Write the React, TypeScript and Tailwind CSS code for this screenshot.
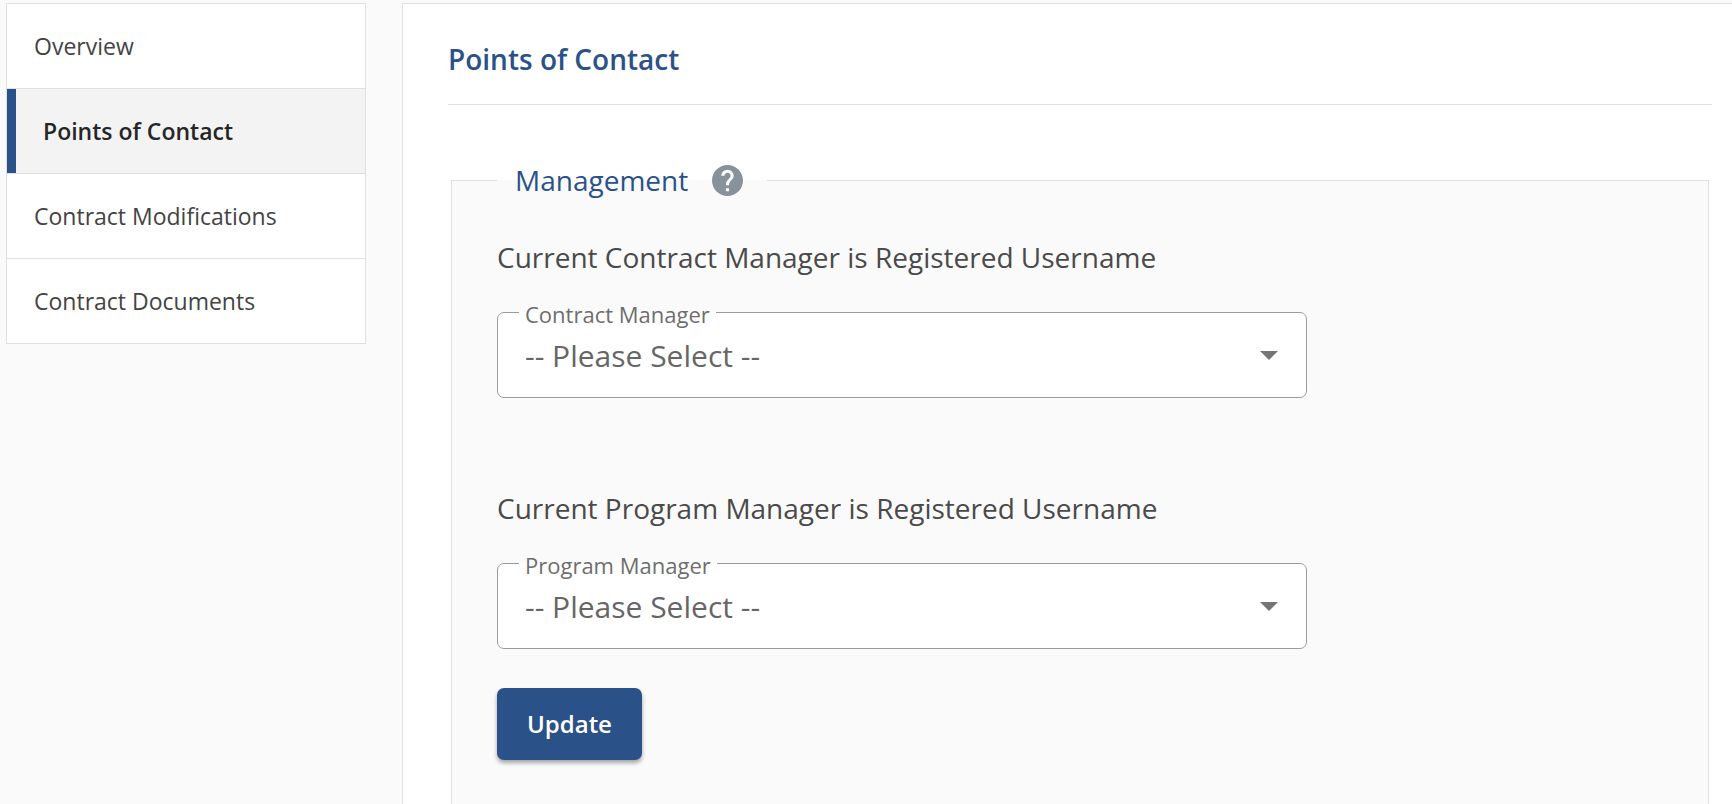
import { useId } from "react";

const NAV_ITEMS = [
  { label: "Overview", active: false },
  { label: "Points of Contact", active: true },
  { label: "Contract Modifications", active: false },
  { label: "Contract Documents", active: false },
];

function SideNav() {
  return (
    <nav aria-label="Contract sections" className="w-[360px] shrink-0">
      <ul className="divide-y divide-[#e0e0e0] border border-[#e0e0e0] bg-white">
        {NAV_ITEMS.map(({ label, active }) => (
          <li key={label}>
            <a
              href="#"
              aria-current={active ? "page" : undefined}
              className={
                active
                  ? "flex h-[84px] items-center border-l-[9px] border-[#2b5288] bg-[#f3f3f3] px-[27px] text-[23px] font-semibold text-[#262626]"
                  : "flex h-[84px] items-center px-[27px] text-[23px] text-[#444]"
              }
            >
              {label}
            </a>
          </li>
        ))}
      </ul>
    </nav>
  );
}

function ManagerField({ heading, label }: { heading: string; label: string }) {
  const id = useId();
  return (
    <div>
      <h3 className="text-[28px] leading-9 text-[#4a4a4a]">{heading}</h3>
      <fieldset className="relative mt-[25px] h-[98px] max-w-[810px] rounded-[7px] border border-[#9b9b9b] bg-white">
        <legend className="ml-[21px] h-6 px-[6px] text-[22px] leading-7 text-[#6e6e6e]">
          <label htmlFor={id}>{label}</label>
        </legend>
        <select
          id={id}
          className="block h-[66px] w-full appearance-none bg-transparent pr-16 pb-1 pl-[27px] text-[30px] text-[#666] outline-none"
        >
          <option>-- Please Select --</option>
        </select>
        <svg
          aria-hidden="true"
          viewBox="0 0 18 9"
          className="pointer-events-none absolute top-[27px] right-7 h-[9px] w-[18px] fill-[#757575]"
        >
          <path d="M0 0h18l-9 9z" />
        </svg>
      </fieldset>
    </div>
  );
}

export default function App() {
  return (
    <div className="flex min-h-screen gap-9 bg-[#fafafa] pt-[3px] pl-1.5 font-['Open_Sans',sans-serif]">
      <SideNav />
      <main className="flex min-w-0 flex-1 flex-col border-t border-l border-[#e0e0e0] bg-white pr-5 pl-[45px]">
        <h1 className="border-b border-[#e0e0e0] pt-[37px] pb-[27px] text-[28px] leading-9 font-semibold text-[#2b5288]">
          Points of Contact
        </h1>
        <fieldset className="mx-[3px] mt-[55px] flex-1 border border-b-0 border-[#e0e0e0] bg-[#fafafa] px-[45px]">
          <legend className="flex h-10 items-center gap-6 pr-6 pl-[18px] text-[28px] text-[#2b5288]">
            Management
            <button type="button" aria-label="Help with management contacts">
              <svg viewBox="2 2 20 20" className="size-[31px] fill-[#87929a]">
                <path d="M12 2C6.48 2 2 6.48 2 12s4.480 10 10 10 10-4.480 10-10S17.520 2 12 2zm1 17h-2v-2h2v2zm2.070-7.750l-.9.920C13.450 12.900 13 13.500 13 15h-2v-.5c0-1.100.450-2.100 1.170-2.830l1.240-1.260c.370-.360.590-.860.590-1.410 0-1.100-.9-2-2-2s-2 .9-2 2H8c0-2.210 1.790-4 4-4s4 1.790 4 4c0 .880-.360 1.680-.930 2.250z" />
              </svg>
            </button>
          </legend>
          <div className="flex flex-col gap-[92px] pt-[39px]">
            <ManagerField
              heading="Current Contract Manager is Registered Username"
              label="Contract Manager"
            />
            <ManagerField
              heading="Current Program Manager is Registered Username"
              label="Program Manager"
            />
          </div>
          <button
            type="button"
            className="mt-[39px] h-[72px] rounded-[7px] bg-[#2b5288] px-[30px] text-2xl font-semibold text-white shadow-[0_3px_4px_rgba(0,0,0,0.35)]"
          >
            Update
          </button>
        </fieldset>
      </main>
    </div>
  );
}
